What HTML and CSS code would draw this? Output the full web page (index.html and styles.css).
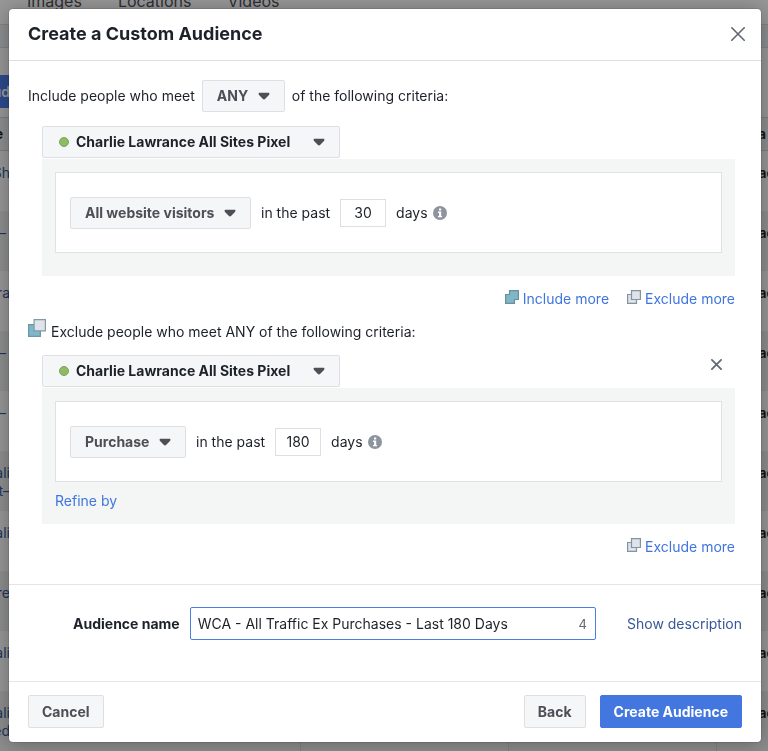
FILE: index.html
```html
<!DOCTYPE html>
<html lang="en">
<head>
<meta charset="utf-8">
<meta name="viewport" content="width=device-width, initial-scale=1">
<title>Create a Custom Audience</title>
<link rel="stylesheet" href="styles.css">
</head>
<body>
<svg class="defs" aria-hidden="true">
  <symbol id="caret" viewBox="0 0 12 8"><path d="M1.400.8h9.200c.6 0 .8.400.8.900 0 .8-.3 1.200-.7 1.600L7.300 6.800c-.7.8-1.900.8-2.600 0L1.300 3.300C.9 2.900.6 2.500.6 1.700c0-.5.2-.9.8-.9z" fill="currentColor"/></symbol>
  <symbol id="info" viewBox="0 0 14 14"><circle cx="7" cy="7" r="7" fill="#8d949e"/><path d="M6 2.500h2.200v2H6zM5 5.600h3.200v4.300H9v1.300H5V9.900h1V6.900H5z" fill="#fff"/></symbol>
  <symbol id="include" viewBox="0 0 14 14"><path d="M4.500.6h8.900v8.900H9.500v3.900H.6V4.500h3.900z" fill="#7db7c8" stroke="#6f8d9b" stroke-width="1.200"/></symbol>
  <symbol id="exclude" viewBox="0 0 14 14"><path d="M4.500.6h8.900v8.900H9.500v3.900H.6V4.500h3.900z" fill="#dfe3ea" stroke="#84949f" stroke-width="1.200"/><path d="M4.500 4.500v5h5" fill="none" stroke="#84949f" stroke-width="1.200"/></symbol>
  <symbol id="exclude-from" viewBox="0 0 18 18"><path d="M.6 5.600h11.800v11.800H.6z" fill="#7db7c8" stroke="#6d97a8" stroke-width="1.200"/><path d="M6.100.6h11.300v11.300H6.100z" fill="#dfe3ea" stroke="#8499a8" stroke-width="1.200"/></symbol>
  <symbol id="cross" viewBox="0 0 14 14"><path d="M.8.8l12.400 12.400M13.200.8L.8 13.200" fill="none" stroke="currentColor" stroke-linecap="round" stroke-width="1.600"/></symbol>
  <symbol id="cross-bold" viewBox="0 0 11 11"><path d="M.9.9l9.200 9.200M10.100.9L.9 10.100" fill="none" stroke="currentColor" stroke-linecap="round" stroke-width="1.700"/></symbol>
</svg>

<div class="page">
  <nav class="tabs"><a href="#">Images</a><a href="#">Locations</a><a href="#">Videos</a></nav>
  <div class="strip"></div>
  <div class="toolbar"><button class="toolbar-button" type="button">ud</button></div>
  <table class="list">
    <colgroup><col class="c-edge"><col class="c-name"><col class="c-mid"><col class="c-mid"><col></colgroup>
    <thead><tr><th><span>e</span></th><th></th><th></th><th></th><th class="last">a</th></tr></thead>
    <tbody>
      <tr><td><span>Sh</span></td><td></td><td></td><td></td><td class="last">ac</td></tr>
      <tr><td><span class="dash">–</span></td><td></td><td></td><td></td><td class="last">ac</td></tr>
      <tr><td><span>ra</span></td><td></td><td></td><td></td><td class="last">ac</td></tr>
      <tr><td><span class="dash">–</span></td><td></td><td></td><td></td><td class="last">ac</td></tr>
      <tr><td><span class="dash">–</span></td><td></td><td></td><td></td><td class="last">ac</td></tr>
      <tr><td><span>ali</span><span>t–</span></td><td></td><td></td><td></td><td class="last">ac</td></tr>
      <tr><td><span>ali</span></td><td></td><td></td><td></td><td class="last">ac</td></tr>
      <tr><td><span>fre</span></td><td></td><td></td><td></td><td class="last">ac</td></tr>
      <tr><td><span>ali</span></td><td></td><td></td><td></td><td class="last">ac</td></tr>
      <tr><td><span>ali</span><span>ed</span></td><td></td><td></td><td></td><td class="last">ac</td></tr>
    </tbody>
  </table>
</div>

<div class="overlay">
  <form class="modal" role="dialog" aria-labelledby="title">
    <header class="modal-head">
      <h1 id="title">Create a Custom Audience</h1>
      <button class="icon-button" type="button" aria-label="Close"><svg class="cross-large"><use href="#cross"/></svg></button>
    </header>

    <div class="criteria">
      <div class="sentence">
        <label for="match">Include people who meet</label>
        <span class="picker"><select id="match"><option>ANY</option></select><svg class="caret"><use href="#caret"/></svg></span>
        <span>of the following criteria:</span>
      </div>

      <section class="group">
        <div class="source">
          <span class="picker pixel"><i class="dot"></i><select aria-label="Pixel source"><option>Charlie Lawrance All Sites Pixel</option></select><svg class="caret"><use href="#caret"/></svg></span>
        </div>
        <div class="panel">
          <div class="rule">
            <span class="picker"><select aria-label="Included event"><option>All website visitors</option></select><svg class="caret"><use href="#caret"/></svg></span>
            <label for="days-in">in the past</label>
            <input class="days" id="days-in" type="text" value="30">
            <span class="unit">days <svg class="info"><use href="#info"/></svg></span>
          </div>
        </div>
        <div class="more">
          <a href="#"><svg class="stack"><use href="#include"/></svg>Include more</a>
          <a href="#"><svg class="stack"><use href="#exclude"/></svg>Exclude more</a>
        </div>
      </section>

      <h2 class="exclude-title"><svg class="stack-large"><use href="#exclude-from"/></svg>Exclude people who meet ANY of the following criteria:</h2>

      <section class="group">
        <div class="source">
          <span class="picker pixel"><i class="dot"></i><select aria-label="Excluded pixel source"><option>Charlie Lawrance All Sites Pixel</option></select><svg class="caret"><use href="#caret"/></svg></span>
          <button class="icon-button remove" type="button" aria-label="Remove"><svg class="cross-small"><use href="#cross-bold"/></svg></button>
        </div>
        <div class="panel refinable">
          <div class="rule">
            <span class="picker"><select aria-label="Excluded event"><option>Purchase</option></select><svg class="caret"><use href="#caret"/></svg></span>
            <label for="days-ex">in the past</label>
            <input class="days" id="days-ex" type="text" value="180">
            <span class="unit">days <svg class="info"><use href="#info"/></svg></span>
          </div>
          <a class="refine" href="#">Refine by</a>
        </div>
        <div class="more">
          <a href="#"><svg class="stack"><use href="#exclude"/></svg>Exclude more</a>
        </div>
      </section>
    </div>

    <div class="naming">
      <label for="name">Audience name</label>
      <div class="name-box"><input id="name" type="text" value="WCA - All Traffic Ex Purchases - Last 180 Days"><span class="count">4</span></div>
      <a href="#">Show description</a>
    </div>

    <footer class="modal-foot">
      <button class="button" type="button">Cancel</button>
      <div class="actions">
        <button class="button" type="button">Back</button>
        <button class="button primary" type="submit">Create Audience</button>
      </div>
    </footer>
  </form>
</div>
</body>
</html>
```

FILE: styles.css
```css
* { box-sizing: border-box; }

html, body { height: 100%; }

body {
  margin: 0;
  overflow: hidden;
  font-family: Inter, "Liberation Sans", sans-serif;
  font-size: 14px;
  line-height: 20px;
  color: #1d2129;
  background: #f3f5f4;
}

a { color: #4075e0; text-decoration: none; }
button, input, select { font: inherit; color: inherit; }
.defs { display: none; }

/* Page behind the dialog */
.page { background: #fafafa; overflow: hidden; }

.tabs {
  display: flex;
  gap: 36px;
  height: 24px;
  padding: 0 27px;
  font-size: 16px;
  line-height: 2px;
}
.tabs a { color: #4b4f56; }

.strip { height: 24px; background: #e9ebee; border: 1px solid #d5d8dc; border-width: 1px 0; }

.toolbar { height: 69px; padding-top: 27px; }
.toolbar-button {
  display: flex;
  justify-content: flex-end;
  width: 80px;
  height: 33px;
  margin-left: -70px;
  padding: 0;
  border: 0;
  align-items: center;
  font-weight: 600;
  color: #fff;
  background: #4a7be8;
}

.list { width: 100%; table-layout: fixed; border-collapse: collapse; }
.c-edge { width: 10px; }
.c-name { width: 290px; }
.c-mid { width: 208px; }
.list th { height: 33px; padding: 0; background: #e9ebee; border: 1px solid #ccd0d5; border-width: 1px 0; }
.list td { height: 60px; padding: 13px 0 0; vertical-align: top; line-height: 18px; color: #365899; border-right: 1px solid #d3d6da; }
.list td:first-child, .list td:last-child { border-right: 0; }
.list tr > :first-child span { display: flex; justify-content: flex-end; }
.list th:first-child { padding-right: 7px; }
.list tbody tr:nth-child(even) { background: #e9ebea; }
.list .last { padding-left: 42px; text-align: left; font-weight: 600; color: #1d2129; }
.list tr > :first-child .dash { padding-right: 4px; }

/* Dialog */
.overlay {
  position: fixed;
  inset: 0;
  padding: 9px 7px 9px 9px;
  overflow: auto;
  background: rgba(0, 0, 0, .4);
}

.modal {
  border-radius: 4px;
  background: #fff;
  box-shadow: 0 0 0 1px rgba(0, 0, 0, .1), 0 2px 20px rgba(0, 0, 0, .3);
}

.modal-head {
  display: flex;
  align-items: center;
  justify-content: space-between;
  height: 52px;
  padding: 0 16px 1px 19px;
  border-bottom: 1px solid #dddfe2;
}
.modal-head h1 { margin: 0; font-size: 18px; font-weight: 700; line-height: 24px; }

.icon-button { display: flex; padding: 0; border: 0; background: none; color: #606770; }
.cross-large { width: 14px; height: 14px; }
.cross-small { width: 11px; height: 11px; }

.criteria { padding: 19px 26px 27px 19px; border-bottom: 1px solid #e5e6e8; }

.sentence { display: flex; align-items: center; gap: 7px; }

.picker { position: relative; display: inline-flex; align-items: center; font-weight: 700; color: #4b4f56; }
.picker select {
  appearance: none;
  height: 32px;
  padding: 0 35px 0 14px;
  border: 1px solid #dddfe2;
  border-radius: 2px;
  background: #f5f6f7;
}
.caret { position: absolute; right: 15px; width: 12px; height: 8px; color: #4b4f56; pointer-events: none; }
.pixel { color: #1d2129; }
.pixel select { padding: 0 48px 0 33px; }
.dot { position: absolute; left: 17px; width: 10px; height: 10px; border: 1px solid #7aa653; border-radius: 50%; background: #8fba66; }

.group { padding: 14px 0 0 14px; }
.source { display: flex; align-items: center; justify-content: space-between; }
.remove { margin: 0 13px 14px 0; }

.panel { margin-top: 1px; padding: 13px 13px 23px; background: #f4f6f6; }
.refinable { padding-bottom: 13px; }
.rule {
  display: flex;
  align-items: center;
  gap: 10px;
  height: 81px;
  padding: 0 14px;
  border: 1px solid #dfe2e4;
  background: #fff;
}
.days { width: 46px; height: 28px; padding: 0; border: 1px solid #dddfe2; text-align: center; }
.unit { display: flex; align-items: center; gap: 5px; }
.info { width: 14px; height: 14px; }
.refine { display: block; margin-top: 9px; }

.more { display: flex; justify-content: flex-end; gap: 18px; padding-top: 13px; }
.more a { display: flex; gap: 4px; }
.stack { width: 14px; height: 14px; margin-top: 1px; }

.exclude-title { display: flex; gap: 5px; align-items: flex-end; margin: 10px 0 0; font-size: 14px; font-weight: 400; line-height: 20px; }
.exclude-title + .group { padding-top: 13px; }
.stack-large { width: 18px; height: 18px; margin-bottom: 5px; }

.naming { display: flex; align-items: center; padding: 22px 19px 41px 64px; border-bottom: 1px solid #e5e6e8; }
.naming label { margin-right: 10px; font-weight: 700; }
.naming a { margin-left: 31px; color: #385898; }
.name-box {
  display: flex;
  flex: 1;
  align-items: center;
  height: 33px;
  padding: 0 8px 0 7px;
  border: 1px solid #4a7fe0;
  border-radius: 2px;
}
.name-box input { flex: 1; min-width: 0; padding: 0; border: 0; outline: 0; background: none; }
.count { font-size: 13px; color: #606770; }

.modal-foot { display: flex; justify-content: space-between; padding: 13px 19px 14px; }
.actions { display: flex; gap: 14px; }
.button {
  height: 33px;
  padding: 0 13px;
  border: 1px solid #dddfe2;
  border-radius: 2px;
  font-weight: 700;
  color: #4b4f56;
  background: #f5f6f7;
}
.primary { border-color: #4377df; color: #fff; background: #4377df; }
```
